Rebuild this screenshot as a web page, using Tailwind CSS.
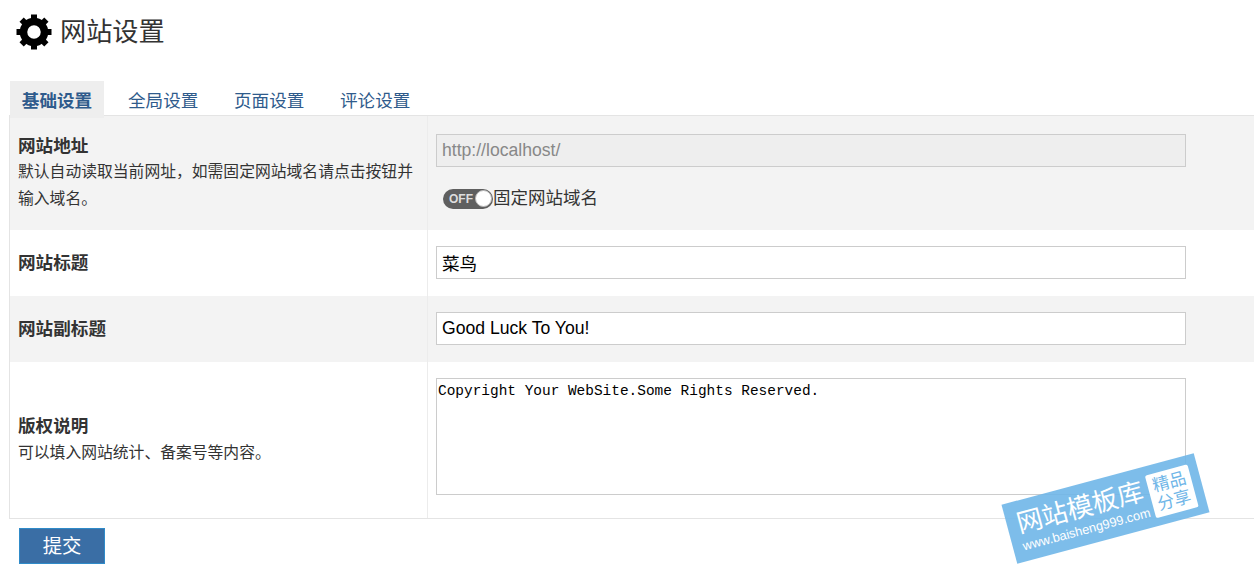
<!DOCTYPE html>
<html lang="zh"><head><meta charset="utf-8"><title>网站设置</title>
<script src="https://cdn.jsdelivr.net/npm/@tailwindcss/browser@4"></script></head>
<body class="relative h-[572px] w-[1254px] overflow-hidden bg-white font-['Liberation_Sans','Noto_Sans_CJK_SC',sans-serif] text-[#333]">
<header class="flex h-[81px] items-start pl-[16px] pt-[14px]">
<svg class="h-9 w-9 shrink-0" viewBox="0 0 36 36" aria-hidden="true"><circle cx="18" cy="18" r="10.500" fill="none" stroke="#000" stroke-width="7.500"/><g fill="#000"><rect x="15" y="0.500" width="6" height="7"/><rect x="15" y="0.500" width="6" height="7" transform="rotate(45 18 18)"/><rect x="15" y="0.500" width="6" height="7" transform="rotate(90 18 18)"/><rect x="15" y="0.500" width="6" height="7" transform="rotate(135 18 18)"/><rect x="15" y="0.500" width="6" height="7" transform="rotate(180 18 18)"/><rect x="15" y="0.500" width="6" height="7" transform="rotate(225 18 18)"/><rect x="15" y="0.500" width="6" height="7" transform="rotate(270 18 18)"/><rect x="15" y="0.500" width="6" height="7" transform="rotate(315 18 18)"/></g></svg>
<h1 class="ml-[8px] text-[26.2px] leading-[37px] font-normal">网站设置</h1>
</header>
<nav class="flex h-[34px] pl-[10px] text-[17.6px] leading-[40px] text-[#2f5b8c]">
<a class="h-[37px] w-[94px] bg-[#eeeeee] text-center font-bold">基础设置</a>
<a class="ml-[24px] w-[70px] whitespace-nowrap">全局设置</a>
<a class="ml-[36px] w-[70px] whitespace-nowrap">页面设置</a>
<a class="ml-[36px] w-[70px] whitespace-nowrap">评论设置</a>
</nav>
<main class="ml-[9px] w-[1245px] border-t border-b border-l border-[#e4e4e4]">
<section class="grid h-[114px] grid-cols-[418px_1fr] bg-[#f3f3f3]">
<div class="border-r border-[#ececec] pl-[8px] pt-[18px]"><h2 class="text-[17.6px] leading-[24px] font-bold">网站地址</h2><p class="w-[400px] text-[15.8px] leading-[27px]">默认自动读取当前网址，如需固定网站域名请点击按钮并输入域名。</p></div>
<div class="pl-[8px] pt-[18px]">
<input class="block h-[33px] w-[750px] border border-[#cccccc] bg-[#eeeeee] px-[5px] text-[17.6px] text-[#888]" value="http://localhost/" disabled>
<div class="mt-[15px] ml-[7px] flex h-[33px] items-center text-[17.5px]"><span class="flex h-[20px] w-[50px] items-center justify-between rounded-full bg-[#5f5f5f] pl-[6px] pr-[1px] text-[12px] font-bold text-[#ddd]">OFF<i class="h-[17px] w-[17px] rounded-full border border-[#bbb] bg-white"></i></span>固定网站域名</div>
</div>
</section>
<section class="grid h-[66px] grid-cols-[418px_1fr] bg-white">
<div class="flex items-center border-r border-[#ececec] pl-[8px]"><h2 class="text-[17.6px] font-bold">网站标题</h2></div>
<div class="flex items-center pb-[1px] pl-[8px]"><input class="h-[33px] w-[750px] border border-[#cccccc] bg-white px-[5px] text-[17.6px] text-black" value="菜鸟"></div>
</section>
<section class="grid h-[66px] grid-cols-[418px_1fr] bg-[#f3f3f3]">
<div class="flex items-center border-r border-[#ececec] pl-[8px]"><h2 class="text-[17.6px] font-bold">网站副标题</h2></div>
<div class="flex items-center pb-[1px] pl-[8px]"><input class="h-[33px] w-[750px] border border-[#cccccc] bg-white px-[5px] text-[17.6px] text-black" value="Good Luck To You!"></div>
</section>
<section class="grid h-[156px] grid-cols-[418px_1fr] bg-white">
<div class="flex flex-col justify-center border-r border-[#ececec] pb-[1px] pl-[8px]"><h2 class="mb-[1px] text-[17.6px] leading-[24px] font-bold">版权说明</h2><p class="text-[15.8px] leading-[27px]">可以填入网站统计、备案号等内容。</p></div>
<div class="pl-[8px] pt-[16px]"><textarea class="block h-[117px] w-[750px] resize-none border border-[#cccccc] bg-white px-[1px] pt-[2px] font-['Liberation_Mono',monospace] text-[14.45px] leading-[20px] text-black">Copyright Your WebSite.Some Rights Reserved.</textarea></div>
</section>
</main>
<button class="mt-[9px] ml-[19px] h-[36px] w-[86px] border border-[#2f8bc9] bg-[#3a6ea5] pt-[1px] text-[19.36px] text-white">提交</button>
<aside class="absolute left-[1006px] top-[478px] flex h-[61px] w-[199px] -rotate-[15deg] items-center justify-between bg-[#6fb6e8]/90 pr-[9px] pl-[10px] text-white">
<div class="w-[134px]"><div class="text-[26px] leading-[30px] whitespace-nowrap">网站模板库</div><div class="text-[12.8px] leading-[15px] whitespace-nowrap">www.baisheng999.com</div></div>
<div class="flex h-[44px] w-[44px] flex-col items-center justify-center rounded-[2px] bg-white text-[17px] leading-[19px] text-[#6fb6e8]"><span>精品</span><span>分享</span></div>
</aside>
</body></html>
